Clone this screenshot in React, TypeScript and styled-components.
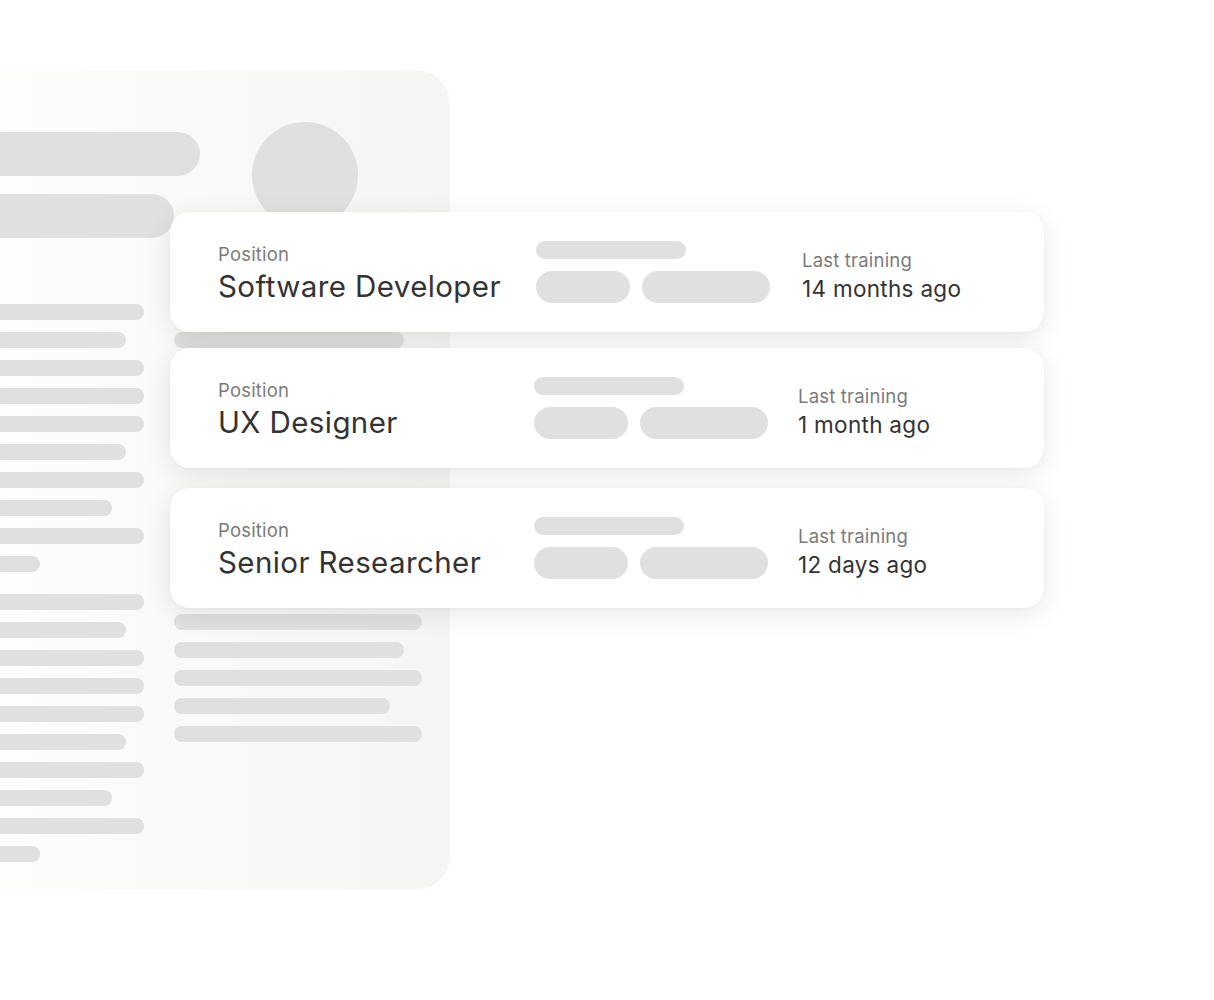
import React from "react";
import styled, { createGlobalStyle } from "styled-components";

const Global = createGlobalStyle`
  html, body { margin: 0; padding: 0; background: #ffffff; }
  body { font-family: "Inter", "Liberation Sans", sans-serif; overflow: hidden; }
`;

const Stage = styled.div`
  display: grid;
  width: 1214px;
  height: 1000px;
  overflow: hidden;
`;

const Panel = styled.div`
  grid-area: 1 / 1;
  align-self: start;
  margin-top: 70px;
  margin-left: -40px;
  width: 490px;
  height: 820px;
  box-sizing: border-box;
  border-radius: 34px;
  background: linear-gradient(90deg, #fefefd 0%, #fafaf9 40%, #f5f5f3 100%);
  padding-top: 52px;
  display: flex;
  flex-direction: column;
`;

const Head = styled.div`
  display: flex;
  align-items: flex-start;
`;

const HeadBars = styled.div`
  margin-top: 10px;
  width: 292px;
  display: flex;
  flex-direction: column;
  gap: 18px;
`;

const BigBar = styled.div<{ $w: number }>`
  width: ${(p) => p.$w}px;
  height: 44px;
  border-radius: 22px;
  background: #e0e0de;
`;

const Avatar = styled.div`
  width: 106px;
  height: 106px;
  border-radius: 50%;
  background: #e0e0de;
`;

const Body = styled.div`
  display: grid;
  grid-template-columns: 184px 248px;
  column-gap: 30px;
  margin-top: 66px;
`;

const BarColumn = styled.div`
  display: flex;
  flex-direction: column;
  align-items: flex-start;
`;

const Line = styled.div<{ $w: number; $top?: number }>`
  width: ${(p) => p.$w}px;
  height: 16px;
  border-radius: 8px;
  background: #e0e0de;
  margin-top: ${(p) => (p.$top ?? 12)}px;
  &:first-child { margin-top: ${(p) => (p.$top ?? 0)}px; }
`;

const Cards = styled.div`
  grid-area: 1 / 1;
  align-self: start;
  margin-top: 212px;
  margin-left: 170px;
  width: 874px;
  display: flex;
  flex-direction: column;
  position: relative;
`;

const Card = styled.div<{ $gap: number; $shift: number }>`
  height: 120px;
  margin-top: ${(p) => p.$gap}px;
  box-sizing: border-box;
  background: #ffffff;
  border-radius: 20px;
  box-shadow: 0 6px 28px rgba(0, 0, 0, 0.09), 0 1px 4px rgba(0, 0, 0, 0.03);
  display: grid;
  grid-template-columns: ${(p) => 316 + p.$shift}px ${(p) => 264 + p.$shift}px 1fr;
  align-items: center;
  padding-left: 48px;
`;

const Stack = styled.div<{ $down?: number }>`
  display: flex;
  flex-direction: column;
  margin-top: ${(p) => (p.$down ?? 0) * 2}px;
`;

const Label = styled.div`
  font-size: 18.5px;
  line-height: 22px;
  color: #7b7b7b;
  letter-spacing: 0.2px;
`;

const Title = styled.div`
  font-size: 29.5px;
  line-height: 36px;
  color: #333333;
  letter-spacing: 0.4px;
  margin-top: 3px;
`;

const Value = styled.div`
  font-size: 22.5px;
  line-height: 28px;
  color: #333333;
  letter-spacing: 0.3px;
  margin-top: 4px;
`;

const Skeleton = styled.div`
  display: flex;
  flex-direction: column;
  gap: 12px;
`;

const SkelTop = styled.div`
  width: 150px;
  height: 18px;
  border-radius: 9px;
  background: #e0e0e0;
`;

const PillRow = styled.div`
  display: flex;
  gap: 12px;
`;

const Pill = styled.div<{ $w: number }>`
  width: ${(p) => p.$w}px;
  height: 32px;
  border-radius: 16px;
  background: #e0e0e0;
`;

const rows = [
  { title: "Software Developer", ago: "14 months ago", gap: 0, shift: 2 },
  { title: "UX Designer", ago: "1 month ago", gap: 16, shift: 0 },
  { title: "Senior Researcher", ago: "12 days ago", gap: 20, shift: 0 },
];

const leftWidths = [184, 166, 184, 184, 184, 166, 184, 152, 184, 80];

export default function App() {
  return (
    <>
      <Global />
      <Stage>
        <Panel>
          <Head>
            <HeadBars>
              <BigBar $w={240} />
              <BigBar $w={214} />
            </HeadBars>
            <Avatar />
          </Head>
          <Body>
            <BarColumn>
              {leftWidths.map((w, i) => (
                <Line key={"a" + i} $w={w} />
              ))}
              {leftWidths.map((w, i) => (
                <Line key={"b" + i} $w={w} $top={i === 0 ? 22 : undefined} />
              ))}
            </BarColumn>
            <BarColumn>
              <Line $w={230} $top={28} />
              <Line $w={248} $top={266} />
              <Line $w={230} />
              <Line $w={248} />
              <Line $w={216} />
              <Line $w={248} />
            </BarColumn>
          </Body>
        </Panel>
        <Cards>
          {rows.map((r) => (
            <Card key={r.title} $gap={r.gap} $shift={r.shift}>
              <Stack $down={1}>
                <Label>Position</Label>
                <Title>{r.title}</Title>
              </Stack>
              <Skeleton>
                <SkelTop />
                <PillRow>
                  <Pill $w={94} />
                  <Pill $w={128} />
                </PillRow>
              </Skeleton>
              <Stack $down={4}>
                <Label>Last training</Label>
                <Value>{r.ago}</Value>
              </Stack>
            </Card>
          ))}
        </Cards>
      </Stage>
    </>
  );
}
